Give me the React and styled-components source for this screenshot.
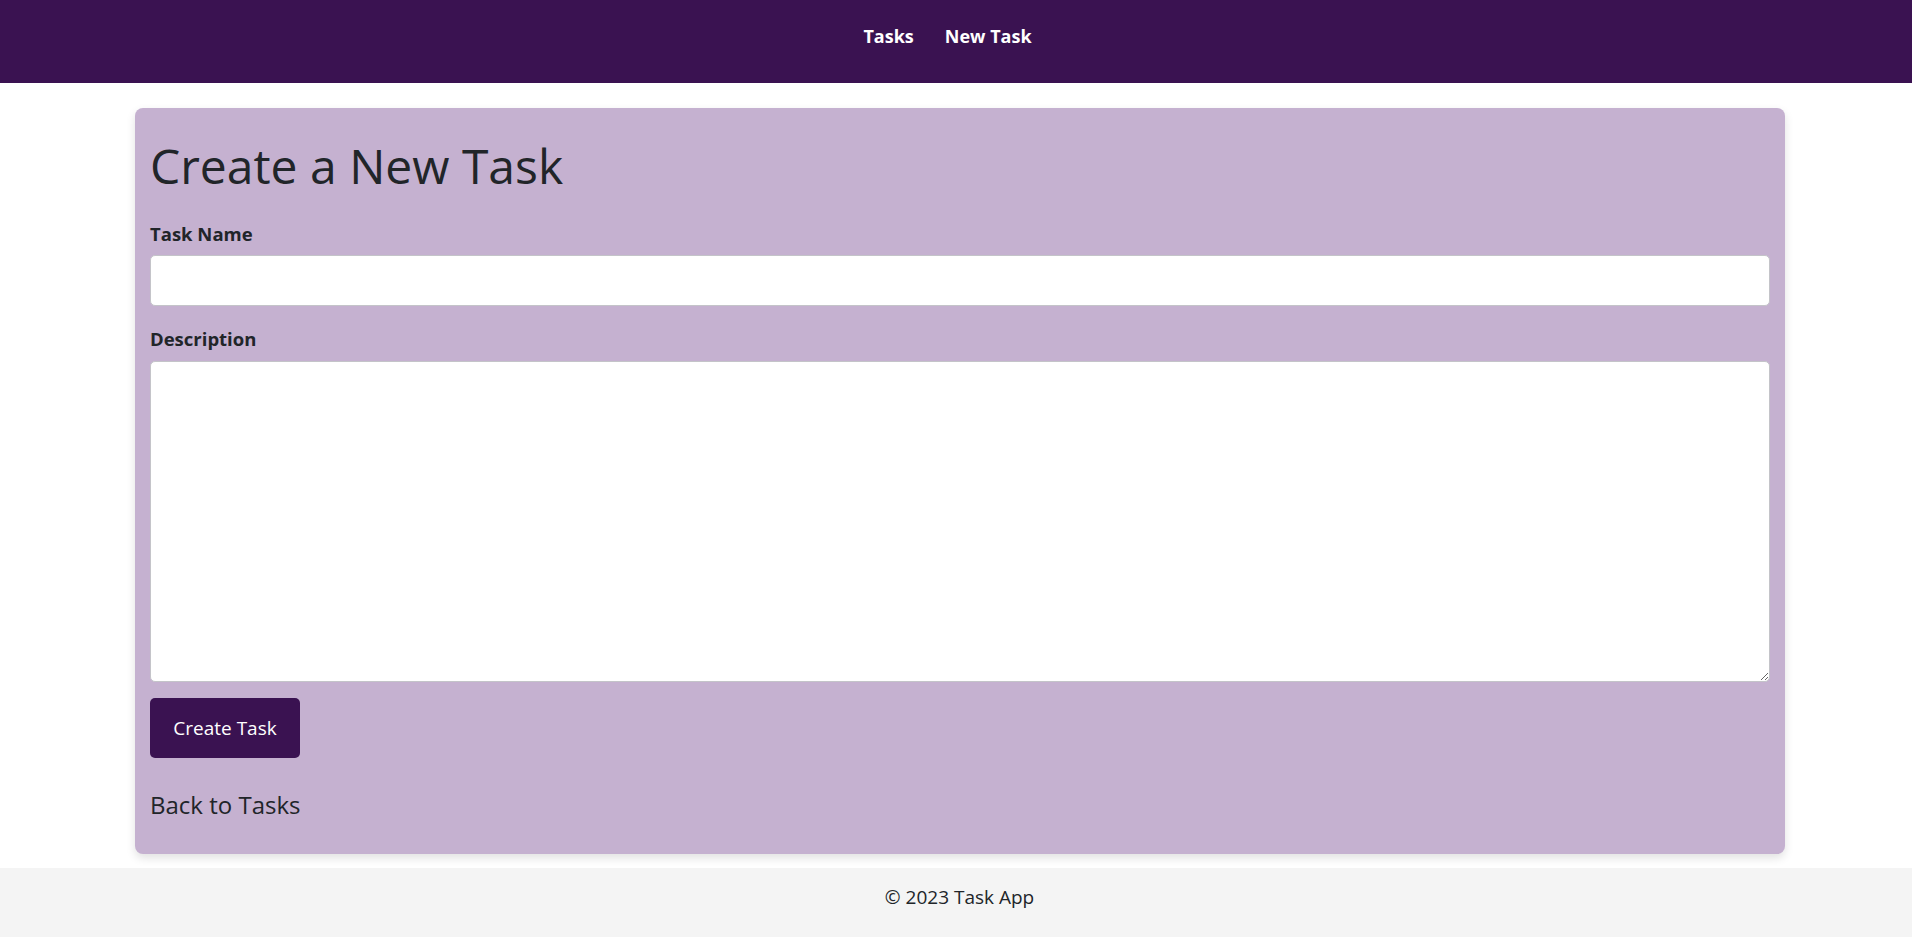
import React, { useState } from "react";
import styled, { createGlobalStyle } from "styled-components";

const GlobalStyle = createGlobalStyle`
  * {
    box-sizing: border-box;
  }
  body {
    margin: 0;
    font-family: "Open Sans", "Noto Sans", sans-serif;
    color: #212529;
    background: #fff;
  }
`;

function App() {
  const [input, setInput] = useState({ name: "", description: "" });

  const onChangeHandler = (e) => {
    const { name, value } = e.target;
    setInput({ ...input, [name]: value });
  };

  const onSubmitHandler = (e) => {
    e.preventDefault();
    setInput({ name: "", description: "" });
  };

  return (
    <Page>
      <GlobalStyle />
      <Header>
        <Nav>
          <NavLink href="#">Tasks</NavLink>
          <NavLink href="#">New Task</NavLink>
        </Nav>
      </Header>
      <Main>
        <Card>
          <Title>Create a New Task</Title>
          <Form onSubmit={onSubmitHandler}>
            <FormGroup>
              <Label htmlFor="name">Task Name</Label>
              <InputText
                type="text"
                id="name"
                name="name"
                value={input.name}
                onChange={onChangeHandler}
              />
            </FormGroup>
            <FormGroup $last>
              <Label htmlFor="description">Description</Label>
              <Textarea
                id="description"
                name="description"
                value={input.description}
                onChange={onChangeHandler}
              />
            </FormGroup>
            <Button type="submit">Create Task</Button>
          </Form>
          <BackLink href="#">Back to Tasks</BackLink>
        </Card>
      </Main>
      <Footer>© 2023 Task App</Footer>
    </Page>
  );
}

export default App;

const Page = styled.div`
  display: flex;
  flex-direction: column;
`;

const Header = styled.header`
  height: 83px;
  background-color: #3a1251;
  display: flex;
  justify-content: center;
  padding: 20px 17px 0 0;
`;

const Nav = styled.nav`
  display: flex;
  gap: 31px;
  height: 32px;
  align-items: center;
`;

const NavLink = styled.a`
  color: #fff;
  font-weight: 700;
  font-size: 18px;
  text-decoration: none;
`;

const Main = styled.main`
  padding: 25px 127px 14px 135px;
`;

const Card = styled.section`
  background-color: #c5b1d0;
  border-radius: 8px;
  box-shadow: 0 4px 10px rgba(0, 0, 0, 0.12);
  padding: 29px 15px 34px 15px;
`;

const Title = styled.h1`
  margin: 0 0 25px;
  font-size: 48px;
  font-weight: 400;
  line-height: 1.2;
`;

const Form = styled.form`
  display: flex;
  flex-direction: column;
  align-items: flex-start;
`;

const FormGroup = styled.div`
  width: 100%;
  margin-bottom: ${(p) => (p.$last ? "16px" : "19px")};
`;

const Label = styled.label`
  display: block;
  font-weight: 700;
  font-size: 18.5px;
  line-height: 1.5;
  margin-bottom: 8px;
`;

const InputText = styled.input`
  display: block;
  width: 100%;
  height: 51px;
  padding: 8px 14px;
  font-size: 20px;
  font-family: inherit;
  border: 1px solid #c4c4c9;
  border-radius: 5px;
  background: #fff;
`;

const Textarea = styled.textarea`
  display: block;
  width: 100%;
  height: 321px;
  padding: 8px 14px;
  font-size: 20px;
  font-family: inherit;
  border: 1px solid #c4c4c9;
  border-radius: 5px;
  background: #fff;
  resize: vertical;
`;

const Button = styled.button`
  width: 150px;
  height: 60px;
  background-color: #3a1251;
  color: #fff;
  border: none;
  border-radius: 5px;
  font-family: inherit;
  font-size: 19px;
  cursor: pointer;
`;

const BackLink = styled.a`
  display: block;
  width: fit-content;
  margin-top: 33px;
  font-size: 24px;
  line-height: 1.2;
  color: #212529;
  text-decoration: none;
`;

const Footer = styled.footer`
  background-color: #f4f4f4;
  text-align: center;
  padding: 15px 0 28px 7px;
  font-size: 19px;
  line-height: 1.5;
  color: #212529;
`;
